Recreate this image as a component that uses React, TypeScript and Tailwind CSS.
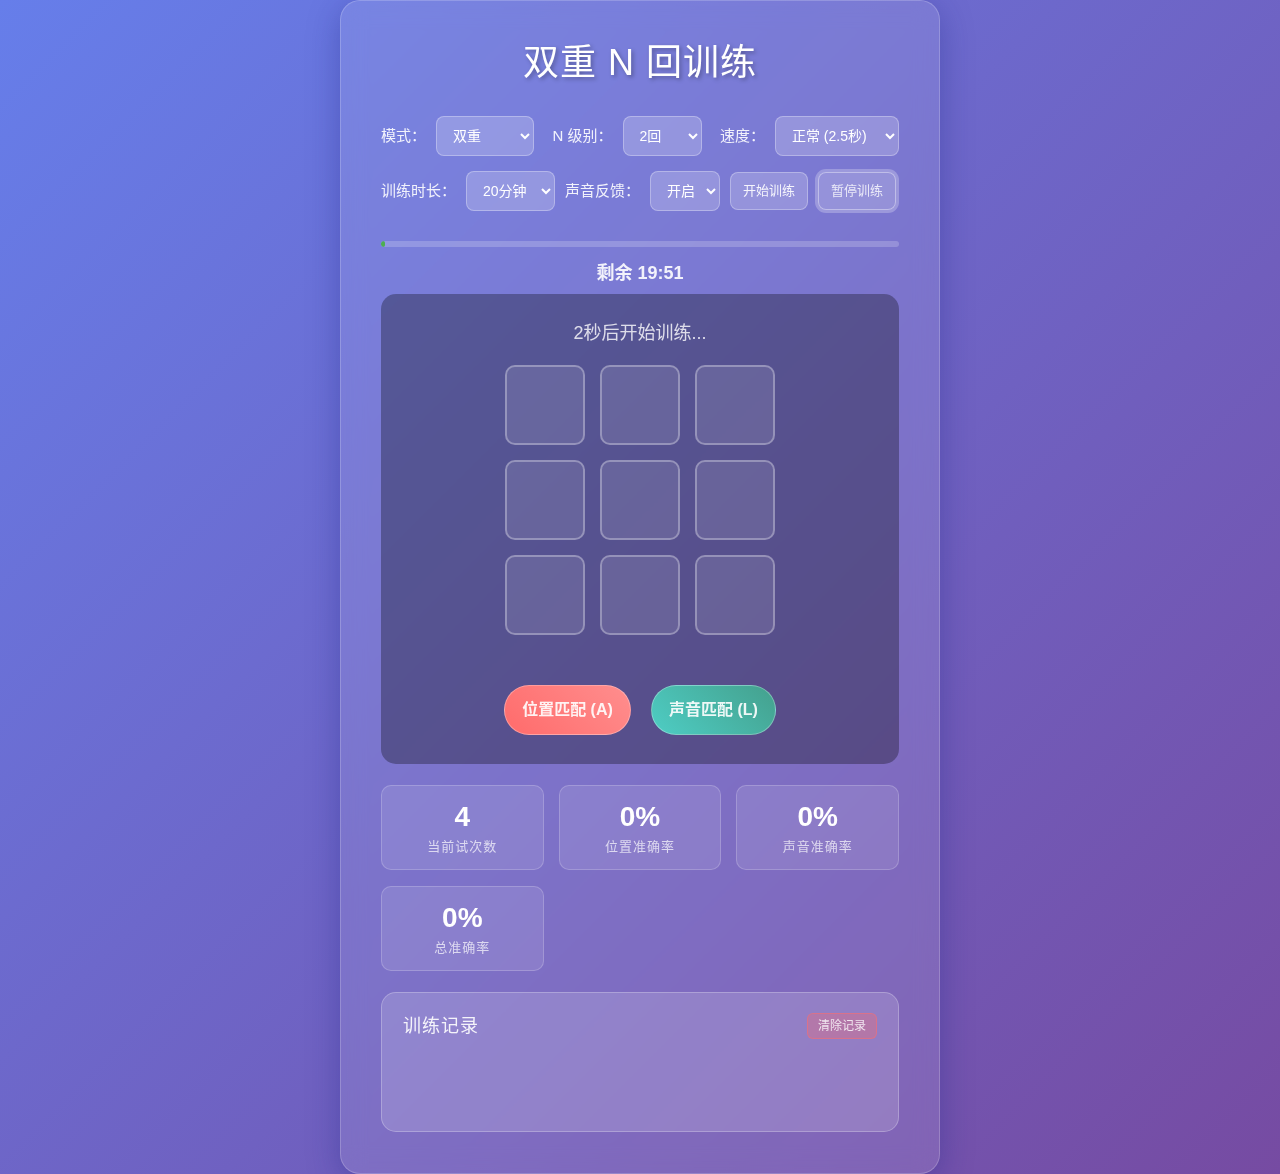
import React from "react";

const font = { fontFamily: '"Liberation Sans", Arial, "Noto Sans CJK SC", sans-serif' };

function Field({ label, width, options }: { label: string; width: string; options: string[] }) {
  return (
    <div className="flex items-center gap-[10px]">
      <label className="text-[15px] text-white/90 whitespace-nowrap">{label}</label>
      <select
        className={`h-10 ${width} rounded-lg border border-white/30 bg-white/20 pl-3 pr-1 text-sm text-white outline-none`}
        defaultValue={options[0]}
      >
        {options.map((o) => (
          <option key={o} value={o} className="text-black">
            {o}
          </option>
        ))}
      </select>
    </div>
  );
}

function StatCard({ value, label }: { value: string; label: string }) {
  return (
    <div className="flex h-[85px] flex-col items-center justify-center rounded-[10px] border border-white/20 bg-white/10 pt-[2px]">
      <div className="text-[28px] leading-8 font-bold text-white">{value}</div>
      <div className="mt-1 text-[13px] tracking-[1px] text-white/70">{label}</div>
    </div>
  );
}

export default function App() {
  return (
    <div
      className="flex min-h-screen justify-center bg-[linear-gradient(135deg,#667eea_0%,#764ba2_100%)]"
      style={font}
    >
      <div className="w-[600px] min-h-[1174px] rounded-[20px] border border-white/20 bg-white/10 px-10 pt-10 pb-10 shadow-[0_8px_32px_rgba(31,38,135,0.37)] backdrop-blur-md">
        <h1 className="text-center text-[36px] leading-[43px] tracking-[1px] text-white [text-shadow:2px_2px_4px_rgba(0,0,0,0.3)]">
          双重 N 回训练
        </h1>

        <div className="mt-[32px] flex flex-col gap-[15px]">
          <div className="flex items-center justify-between">
            <Field label="模式：" width="w-[98px]" options={["双重", "位置", "声音"]} />
            <Field label="N 级别：" width="w-[79px]" options={["2回", "1回", "3回", "4回"]} />
            <Field label="速度：" width="w-[124px]" options={["正常 (2.5秒)", "快速 (2秒)", "慢速 (3秒)"]} />
          </div>
          <div className="flex h-10 items-center justify-between pr-[3px]">
            <Field label="训练时长：" width="w-[89px]" options={["20分钟", "10分钟", "30分钟"]} />
            <Field label="声音反馈：" width="w-[70px]" options={["开启", "关闭"]} />
            <button className="h-[38px] whitespace-nowrap rounded-lg border border-white/30 bg-white/20 px-3 text-[13px] text-white/90">
              开始训练
            </button>
            <button className="h-[38px] whitespace-nowrap rounded-lg border border-white/40 bg-white/20 px-3 text-[13px] text-white/80 shadow-[0_0_0_3px_rgba(255,255,255,0.25)]">
              暂停训练
            </button>
          </div>
        </div>

        <div className="mt-[30px] h-[6px] w-full overflow-hidden rounded-full bg-white/20">
          <div className="h-full rounded-full bg-[#4caf50]" style={{ width: "0.8%" }} />
        </div>

        <div className="mt-[14px] text-center text-lg leading-6 font-bold text-white/90">剩余 19:51</div>

        <div className="mt-[9px] flex flex-col items-center rounded-[15px] bg-black/30 px-[30px] pt-[27px] pb-[29px]">
          <div className="text-lg leading-6 text-white/80">2秒后开始训练...</div>
          <div className="mt-[20px] grid grid-cols-[80px_80px_80px] gap-[15px]">
            {Array.from({ length: 9 }).map((_, i) => (
              <div key={i} className="h-20 w-20 rounded-[10px] border-2 border-white/30 bg-white/10" />
            ))}
          </div>
          <div className="mt-[50px] flex gap-5">
            <button className="h-[50px] w-[127px] whitespace-nowrap rounded-full border border-white/30 bg-[linear-gradient(45deg,#ff6b6b,#ff8e8e)] text-base font-bold text-white/90">
              位置匹配 (A)
            </button>
            <button className="h-[50px] w-[125px] whitespace-nowrap rounded-full border border-white/30 bg-[linear-gradient(45deg,#4ecdc4,#44a08d)] text-base font-bold text-white/90">
              声音匹配 (L)
            </button>
          </div>
        </div>

        <div className="mt-[21px] grid grid-cols-3 gap-x-[15px] gap-y-4">
          <StatCard value="4" label="当前试次数" />
          <StatCard value="0%" label="位置准确率" />
          <StatCard value="0%" label="声音准确率" />
          <StatCard value="0%" label="总准确率" />
        </div>

        <div className="mt-[21px] h-[140px] rounded-[15px] border border-white/25 bg-white/15 px-[21px] pt-[19px]">
          <div className="flex items-center justify-between">
            <h3 className="text-lg tracking-[1px] text-white/90">训练记录</h3>
            <button className="h-[26px] rounded-md border border-[#ff6b6b]/50 bg-[#ff6b6b]/30 px-[10px] text-xs text-white/80">
              清除记录
            </button>
          </div>
        </div>
      </div>
    </div>
  );
}
